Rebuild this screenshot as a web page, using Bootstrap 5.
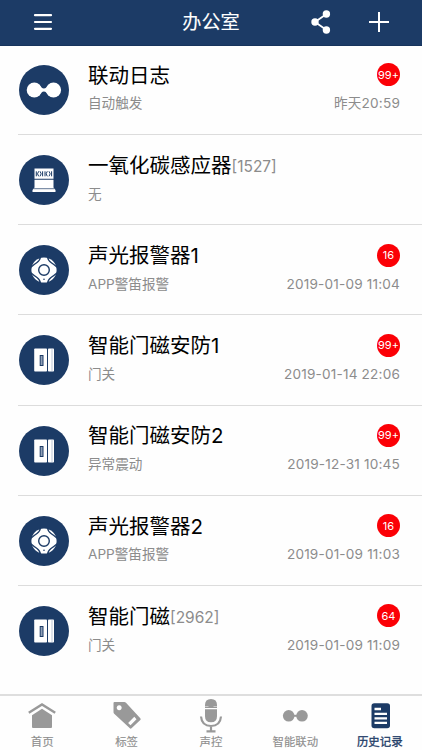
<!DOCTYPE html>
<html lang="zh-CN">
<head>
<meta charset="utf-8">
<meta name="viewport" content="width=device-width, initial-scale=1">
<title>办公室</title>
<link href="https://cdn.jsdelivr.net/npm/bootstrap@5.3.0/dist/css/bootstrap.min.css" rel="stylesheet">
<style>
:root{--navy:#1c3b66}
body{font-family:Inter,"Noto Sans CJK SC",sans-serif;background:#fefefe;color:#000}
.topbar{height:45.5px;background:var(--navy);border-bottom:1px solid #17345c}
.topbar h1{font-size:19.2px;line-height:28px;font-weight:400;-webkit-text-stroke:.1px #fff}
.side{width:120px}
.log-list{margin-top:-.7px}
.log-row{height:90.2px;margin-left:18px;padding-right:22px;border-bottom:1px solid #dcdcdc}
.log-row:last-child{border-color:transparent}
.disc{width:50px;height:50px;margin:20px 19px 0 1px}
.line-a{height:30px;margin-top:15px}
.line-b{height:26px;margin-top:.6px;font-size:13.6px;line-height:26px;color:#8c8c8c}
.name{font-size:20.5px;line-height:30px;position:relative;top:.8px}
.code{font-size:15.5px;line-height:30px;color:#8c8c8c;position:relative;top:2.4px}
.stamp{font-size:13.6px;letter-spacing:.18px}
.count{width:23px;height:23px;background:#fb0006;font-size:11px;overflow:hidden}
.tabbar{height:56px;border-top:2px solid #dedede;background:#fefefe}
.tab{color:#8e8e8e;font-size:11.4px;line-height:16px;-webkit-text-stroke:.15px currentColor}
.tab.on{color:var(--navy);-webkit-text-stroke:.3px currentColor}
.tab svg{height:36px;width:44px;margin-top:2px}
</style>
</head>
<body class="vh-100 overflow-hidden d-flex flex-column">
<svg width="0" height="0" class="position-absolute">
  <defs>
    <symbol id="link" viewBox="0 0 50 50"><circle cx="25" cy="25" r="25" fill="#1c3b66"/><g fill="#fff"><circle cx="15.300" cy="25" r="7.600"/><circle cx="34.500" cy="25" r="7.600"/><path d="M20 19.500q4.900 8 9.800 0v11q-4.900-8-9.800 0z"/></g></symbol>
    <symbol id="gas" viewBox="0 0 50 50"><circle cx="25" cy="25" r="25" fill="#1c3b66"/><path fill="#fff" d="M15.500 13.500h19v10.300h-19zM15.500 24.700h19v7.800l2 2.400v2.100h-23v-2.100l2-2.400z"/><path d="M14.500 33.700h21" stroke="#1c3b66" stroke-width=".7"/><path d="M17.300 16.300v5M19.700 16.300l-1.200 2.500 1.200 2.500M21 16.300l1.200 2.500-1.200 2.500M23.600 16.300v5M26 16.300v5M28.300 16.300l-1.200 2.500 1.200 2.500M30 16.300l1.200 2.500-1.200 2.500M32.600 16.300v5" fill="none" stroke="#1c3b66" stroke-width="1"/></symbol>
    <symbol id="siren" viewBox="0 0 50 50"><circle cx="25" cy="25" r="25" fill="#1c3b66"/><circle cx="25" cy="25" r="12.600" fill="#fff"/><g fill="none" stroke="#1c3b66" stroke-width="1.400"><path d="M21.500 11.500q-.5 4-3.500 6t-6.500 5"/><path d="M28.500 11.500q.5 4 3.500 6t6.500 5"/><path d="M21.500 38.500q-.5-4-3.500-6t-6.500-5"/><path d="M28.500 38.500q.5-4 3.500-6t6.500-5"/><circle cx="25" cy="25" r="5.300"/></g><circle cx="25" cy="34.300" r=".8" fill="#1c3b66"/></symbol>
    <symbol id="door" viewBox="0 0 50 50"><circle cx="25" cy="25" r="25" fill="#1c3b66"/><rect x="15.200" y="13.500" width="12.800" height="23" rx=".8" fill="#fff"/><rect x="29" y="13.500" width="6" height="23" rx=".8" fill="#fff"/><path d="M33 13.500v23" stroke="#8fa0b8" stroke-width=".6"/><rect x="21.200" y="20.500" width="2.800" height="10" fill="#8fa0b8" stroke="#1c3b66" stroke-width="1"/></symbol>
  </defs>
</svg>

<header class="topbar d-flex align-items-center justify-content-between text-white flex-shrink-0">
  <div class="side d-flex ps-4"><svg class="ms-2" width="22" height="22" viewBox="0 0 22 22"><path d="M3 4.200h16M3 11h16M3 17.800h16" stroke="#fff" stroke-width="2.200" stroke-linecap="round"/></svg></div>
  <h1 class="mb-0">办公室</h1>
  <div class="side d-flex justify-content-end pe-4">
    <svg width="26" height="26" viewBox="0 0 26 26" class="me-4"><path d="M16.500 5L5 13 16.500 21" fill="none" stroke="#fff" stroke-width="1.800"/><g fill="#fff"><circle cx="16.400" cy="5" r="3.700"/><circle cx="5" cy="13" r="3.700"/><circle cx="16.400" cy="21" r="3.700"/></g></svg>
    <svg width="26" height="26" viewBox="0 0 26 26" class="ms-2 me-1"><path d="M1 13h20M11 3v20" stroke="#fff" stroke-width="2"/></svg>
  </div>
</header>

<main class="log-list flex-grow-1">
  <div class="log-row d-flex"><svg class="disc flex-shrink-0"><use href="#link"/></svg>
    <div class="flex-grow-1"><div class="line-a d-flex justify-content-between align-items-center"><span class="name">联动日志</span><span class="count rounded-circle text-white d-flex align-items-center justify-content-center">99+</span></div>
    <div class="line-b d-flex justify-content-between"><span>自动触发</span><span class="stamp">昨天20:59</span></div></div></div>
  <div class="log-row d-flex"><svg class="disc flex-shrink-0"><use href="#gas"/></svg>
    <div class="flex-grow-1"><div class="line-a d-flex"><span class="name">一氧化碳感应器</span><span class="code">[1527]</span></div>
    <div class="line-b">无</div></div></div>
  <div class="log-row d-flex"><svg class="disc flex-shrink-0"><use href="#siren"/></svg>
    <div class="flex-grow-1"><div class="line-a d-flex justify-content-between align-items-center"><span class="name">声光报警器1</span><span class="count rounded-circle text-white d-flex align-items-center justify-content-center">16</span></div>
    <div class="line-b d-flex justify-content-between"><span>APP警笛报警</span><span class="stamp">2019-01-09 11:04</span></div></div></div>
  <div class="log-row d-flex"><svg class="disc flex-shrink-0"><use href="#door"/></svg>
    <div class="flex-grow-1"><div class="line-a d-flex justify-content-between align-items-center"><span class="name">智能门磁安防1</span><span class="count rounded-circle text-white d-flex align-items-center justify-content-center">99+</span></div>
    <div class="line-b d-flex justify-content-between"><span>门关</span><span class="stamp">2019-01-14 22:06</span></div></div></div>
  <div class="log-row d-flex"><svg class="disc flex-shrink-0"><use href="#door"/></svg>
    <div class="flex-grow-1"><div class="line-a d-flex justify-content-between align-items-center"><span class="name">智能门磁安防2</span><span class="count rounded-circle text-white d-flex align-items-center justify-content-center">99+</span></div>
    <div class="line-b d-flex justify-content-between"><span>异常震动</span><span class="stamp">2019-12-31 10:45</span></div></div></div>
  <div class="log-row d-flex"><svg class="disc flex-shrink-0"><use href="#siren"/></svg>
    <div class="flex-grow-1"><div class="line-a d-flex justify-content-between align-items-center"><span class="name">声光报警器2</span><span class="count rounded-circle text-white d-flex align-items-center justify-content-center">16</span></div>
    <div class="line-b d-flex justify-content-between"><span>APP警笛报警</span><span class="stamp">2019-01-09 11:03</span></div></div></div>
  <div class="log-row d-flex"><svg class="disc flex-shrink-0"><use href="#door"/></svg>
    <div class="flex-grow-1"><div class="line-a d-flex justify-content-between align-items-center"><span class="d-flex"><span class="name">智能门磁</span><span class="code">[2962]</span></span><span class="count rounded-circle text-white d-flex align-items-center justify-content-center">64</span></div>
    <div class="line-b d-flex justify-content-between"><span>门关</span><span class="stamp">2019-01-09 11:09</span></div></div></div>
</main>

<nav class="tabbar row row-cols-5 g-0 flex-shrink-0 text-center">
  <div class="tab col d-flex flex-column align-items-center"><svg viewBox="0 0 44 36" fill="#999"><path d="M8.800 14.800L22 6.500 35.200 14.800" fill="none" stroke="#999" stroke-width="2.400"/><path d="M12 17.200l10-6.500 10 6.500v11.800q0 1-1 1H13q-1 0-1-1z"/></svg><span>首页</span></div>
  <div class="tab col d-flex flex-column align-items-center"><svg viewBox="0 0 44 36"><path fill="#999" fill-rule="evenodd" d="M9.500 4h9.800q1 0 1.700.7l14.300 15.500q.9 1 0 1.900l-8.800 8.200q-1 .8-1.900-.2L9.200 15.700q-.7-.8-.7-1.800V5q0-1 1-1zM14.200 7.300a2.500 2.500 0 1 0 .01 0zM29.300 18.700l-6.200 6.200 2.400 2.300 6-6z"/></svg><span>标签</span></div>
  <div class="tab col d-flex flex-column align-items-center"><svg viewBox="0 0 44 36" fill="#999"><path d="M16 10V7q0-6 6-6T28 7v3zM16 11.300h12v7q0 6-6 6t-6-6z"/><path d="M16 8.500h3.500M24.500 8.500H28" stroke="#ddd" stroke-width=".7"/><path d="M12 18.500q.8 9.500 10 9.500t10-9.500M22 28v5M17.500 33.300h9" fill="none" stroke="#999" stroke-width="2.200"/></svg><span>声控</span></div>
  <div class="tab col d-flex flex-column align-items-center"><svg viewBox="0 0 44 36" fill="#999"><circle cx="15.700" cy="17.800" r="5.800"/><circle cx="29" cy="17.800" r="5.800"/><path d="M19 17.800h6" stroke="#999" stroke-width="2"/></svg><span>智能联动</span></div>
  <div class="tab on col d-flex flex-column align-items-center"><svg viewBox="0 0 44 36"><rect x="13.500" y="5.300" width="18.500" height="25" rx="2.800" fill="#1c3b66"/><path d="M16.500 11h6.500M16.500 15.800h12.500M16.500 20.300h12.500M16.500 24.800h12.500" stroke="#fff" stroke-width="2.300"/></svg><span>历史记录</span></div>
</nav>
<script src="https://cdn.jsdelivr.net/npm/bootstrap@5.3.0/dist/js/bootstrap.bundle.min.js"></script>
</body>
</html>
